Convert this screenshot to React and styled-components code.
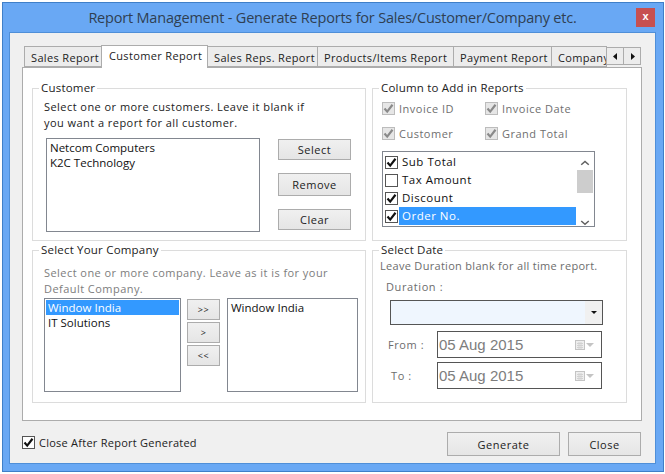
import styled, { createGlobalStyle } from "styled-components"

const GlobalStyle = createGlobalStyle`
    html, body { margin: 0; padding: 0; background: #fff; }
    body { font-family: "Open Sans", "Noto Sans", sans-serif; font-size: 11px; color: #222; }
`

const Tick = ({ color = "#111" }) => (
    <svg width="11" height="11" viewBox="0 0 11 11">
        <path d="M1.5 5.5 L4.2 8.6 L9.5 1.8" fill="none" stroke={color} strokeWidth="2.2" />
    </svg>
)

const CheckBox = ({ checked, disabled }) => (
    <Box $disabled={disabled}>{checked && <Tick color={disabled ? "#8a8a8a" : "#111"} />}</Box>
)

const CalendarIcon = () => (
    <svg width="20" height="10" viewBox="0 0 20 10">
        <rect x="0.5" y="0.5" width="9" height="9" fill="#eee" stroke="#c4c4c4" />
        <path d="M2 3.5H8M2 5.5H8M2 7.5H8M4 2V9M6 2V9" stroke="#d2d2d2" />
        <path d="M11 3H19L15 7Z" fill="#c4c4c4" />
    </svg>
)

const tabs = [
    { label: "Sales Report", width: 78 },
    { label: "Customer Report", width: 107, active: true },
    { label: "Sales Reps. Report", width: 111 },
    { label: "Products/Items Report", width: 137 },
    { label: "Payment Report", width: 99 },
    { label: "Company Report", width: 56 },
]

const columns = [
    { label: "Sub Total", checked: true },
    { label: "Tax Amount", checked: false },
    { label: "Discount", checked: true },
    { label: "Order No.", checked: true, selected: true },
]

const App = () => (
    <>
        <GlobalStyle />
        <Window>
            <TitleBar>
                <span />
                <Title>Report Management - Generate Reports for Sales/Customer/Company etc.</Title>
                <CloseX>x</CloseX>
            </TitleBar>
            <Content>
                <TabStrip>
                    {tabs.map(t => (
                        <Tab key={t.label} $active={t.active} $width={t.width}>{t.label}</Tab>
                    ))}
                    <TabArrow>
                        <svg width="5" height="7" viewBox="0 0 5 7"><path d="M4 0V7L0 3.5Z" fill="#111" /></svg>
                    </TabArrow>
                    <TabArrow>
                        <svg width="5" height="7" viewBox="0 0 5 7"><path d="M1 0V7L5 3.5Z" fill="#111" /></svg>
                    </TabArrow>
                </TabStrip>
                <Pane>
                    <Group>
                        <Legend>Customer</Legend>
                        <Hint>Select one or more customers. Leave it blank if<br />you want a report for all customer.</Hint>
                        <CustomerRow>
                            <ListBox $width={214} $height={94}>
                                <ListItem>Netcom Computers</ListItem>
                                <ListItem>K2C Technology</ListItem>
                            </ListBox>
                            <ButtonStack>
                                <Button $width={73} $height={21}>Select</Button>
                                <Button $width={73} $height={23}>Remove</Button>
                                <Button $width={73} $height={21}>Clear</Button>
                            </ButtonStack>
                        </CustomerRow>
                    </Group>

                    <Group>
                        <Legend>Column to Add in Reports</Legend>
                        <FixedColumns>
                            <CheckRow $muted><CheckBox checked disabled />Invoice ID</CheckRow>
                            <CheckRow $muted><CheckBox checked disabled />Invoice Date</CheckRow>
                            <CheckRow $muted><CheckBox checked disabled />Customer</CheckRow>
                            <CheckRow $muted><CheckBox checked disabled />Grand Total</CheckRow>
                        </FixedColumns>
                        <CheckList>
                            <CheckListRows>
                                {columns.map(c => (
                                    <CheckListRow key={c.label}>
                                        <CheckBox checked={c.checked} />
                                        <CheckListLabel $selected={c.selected}>{c.label}</CheckListLabel>
                                    </CheckListRow>
                                ))}
                            </CheckListRows>
                            <ScrollBar>
                                <svg width="10" height="6" viewBox="0 0 10 6"><path d="M1 5L5 1.5L9 5" fill="none" stroke="#606060" strokeWidth="1.6" /></svg>
                                <ScrollThumb />
                                <svg width="10" height="6" viewBox="0 0 10 6"><path d="M1 1L5 4.5L9 1" fill="none" stroke="#606060" strokeWidth="1.6" /></svg>
                            </ScrollBar>
                        </CheckList>
                    </Group>

                    <Group>
                        <Legend>Select Your Company</Legend>
                        <CompanyHint>Select one or more company. Leave as it is for your<br />Default Company.</CompanyHint>
                        <CompanyRow>
                            <ListBox $width={137} $height={94}>
                                <ListItem $selected>Window India</ListItem>
                                <ListItem>IT Solutions</ListItem>
                            </ListBox>
                            <MoveStack>
                                <Button $width={33} $height={21} $small>&gt;&gt;</Button>
                                <Button $width={33} $height={21} $small>&gt;</Button>
                                <Button $width={33} $height={21} $small>&lt;&lt;</Button>
                            </MoveStack>
                            <ListBox $width={131} $height={94}>
                                <ListItem>Window India</ListItem>
                            </ListBox>
                        </CompanyRow>
                    </Group>

                    <Group>
                        <Legend>Select Date</Legend>
                        <DateHint>Leave Duration blank for all time report.</DateHint>
                        <DurationLabel>Duration :</DurationLabel>
                        <Combo>
                            <ComboField />
                            <ComboArrow>
                                <svg width="6" height="3" viewBox="0 0 6 3"><path d="M0 0H6L3 3Z" fill="#111" /></svg>
                            </ComboArrow>
                        </Combo>
                        <DateRow>
                            <DateLabel $indent={0}>From :</DateLabel>
                            <DateField>05 Aug 2015<CalendarIcon /></DateField>
                        </DateRow>
                        <DateRow $gap={4}>
                            <DateLabel $indent={3}>To :</DateLabel>
                            <DateField>05 Aug 2015<CalendarIcon /></DateField>
                        </DateRow>
                    </Group>
                </Pane>
                <Footer>
                    <FooterCheck><CheckBox checked />Close After Report Generated</FooterCheck>
                    <FooterButtons>
                        <Button $width={113} $height={24}>Generate</Button>
                        <Button $width={73} $height={24}>Close</Button>
                    </FooterButtons>
                </Footer>
            </Content>
        </Window>
    </>
)

const Window = styled.div`
    box-sizing: border-box;
    width: 662px;
    height: 470px;
    margin: 2px 0 0 2px;
    border: 1px solid #3f7fc8;
    background: #69a8f4;
    display: flex;
    flex-direction: column;
    padding: 0 7px 7px 6px;
`

const TitleBar = styled.div`
    height: 29px;
    flex: none;
    display: grid;
    grid-template-columns: 1fr auto 1fr;
    align-items: start;
`

const Title = styled.div`
    font-size: 14.5px;
    line-height: 30px;
    color: #2f3f52;
    white-space: nowrap;
    letter-spacing: -0.2px;
`

const CloseX = styled.div`
    justify-self: end;
    width: 19px;
    height: 19px;
    margin: 5px 1px 0 0;
    background: #c75050;
    color: #fff;
    font: bold 11px/17px "Liberation Sans", sans-serif;
    text-align: center;
`

const Content = styled.div`
    flex: 1;
    background: #f0f0f0;
    border: 1px solid #4f8fd8;
    padding: 13px 13px 0 12px;
    display: flex;
    flex-direction: column;
`

const TabStrip = styled.div`
    height: 22px;
    flex: none;
    display: flex;
    align-items: flex-end;
    padding-left: 3px;
    position: relative;
    z-index: 1;
    margin-bottom: -1px;
`

const Tab = styled.div`
    box-sizing: border-box;
    width: ${p => p.$width}px;
    height: ${p => (p.$active ? 23 : 21)}px;
    margin-bottom: ${p => (p.$active ? 0 : 1)}px;
    border: 1px solid #acacac;
    border-bottom: ${p => (p.$active ? "none" : "1px solid #acacac")};
    margin-left: -1px;
    background: ${p => (p.$active ? "#fff" : "#ececec")};
    font-size: 11px;
    line-height: ${p => (p.$active ? 19 : 21)}px;
    padding-left: ${p => (p.$active ? 7 : 6)}px;
    white-space: nowrap;
    overflow: hidden;
    letter-spacing: 0.35px;
    flex: none;
`

const TabArrow = styled.div`
    box-sizing: border-box;
    width: 18px;
    height: 18px;
    margin: 0 0 3px -1px;
    border: 1px solid #acacac;
    background: #ececec;
    display: flex;
    align-items: center;
    justify-content: center;
    flex: none;
`

const Pane = styled.div`
    box-sizing: border-box;
    height: 354px;
    flex: none;
    background: #fff;
    border: 1px solid #acacac;
    padding: 20px 14px 0 9px;
    display: grid;
    grid-template-columns: 334px 255px;
    grid-template-rows: 153px 153px;
    column-gap: 6px;
    row-gap: 9px;
`

const Group = styled.div`
    box-sizing: border-box;
    position: relative;
    border: 1px solid #dcdcdc;
`

const Legend = styled.div`
    position: absolute;
    top: -9px;
    left: 6px;
    padding: 0 2px;
    background: #fff;
    font-size: 11.5px;
    line-height: 16px;
    letter-spacing: 0.2px;
    white-space: nowrap;
`

const Hint = styled.div`
    margin: 10px 0 0 11px;
    font-size: 11px;
    line-height: 16px;
    letter-spacing: 0.45px;
    white-space: nowrap;
`

const CompanyHint = styled(Hint)`
    color: #7d7d7d;
    margin-top: 14px;
`

const DateHint = styled(Hint)`
    color: #6d6d6d;
    margin: 7px 0 0 7px;
    letter-spacing: 0.3px;
`

const CustomerRow = styled.div`
    display: flex;
    margin: 7px 0 0 13px;
`

const ListBox = styled.div`
    box-sizing: border-box;
    width: ${p => p.$width}px;
    height: ${p => p.$height}px;
    flex: none;
    border: 1px solid #828790;
    background: #fff;
    padding: 1px;
`

const ListItem = styled.div`
    height: 15px;
    font-size: 11.5px;
    line-height: 15px;
    padding-left: 2px;
    background: ${p => (p.$selected ? "#3399ff" : "transparent")};
    color: ${p => (p.$selected ? "#fff" : "#111")};
`

const ButtonStack = styled.div`
    display: flex;
    flex-direction: column;
    gap: 13px;
    margin: 1px 0 0 18px;
`

const MoveStack = styled.div`
    display: flex;
    flex-direction: column;
    gap: 2px;
    margin: 1px 7px 0 6px;
`

const Button = styled.div`
    box-sizing: border-box;
    width: ${p => p.$width}px;
    height: ${p => p.$height}px;
    border: 1px solid #acacac;
    background: linear-gradient(#f0f0f0, #e5e5e5);
    font-size: ${p => (p.$small ? 9 : 11)}px;
    letter-spacing: 0.5px;
    display: flex;
    align-items: center;
    justify-content: center;
    color: #222;
    flex: none;
`

const Box = styled.span`
    box-sizing: border-box;
    width: 13px;
    height: 13px;
    flex: none;
    border: 1px solid ${p => (p.$disabled ? "#bcbcbc" : "#555")};
    background: ${p => (p.$disabled ? "#e6e6e6" : "#fff")};
    display: inline-flex;
    align-items: center;
    justify-content: center;
`

const CheckRow = styled.div`
    display: flex;
    align-items: center;
    gap: 4px;
    font-size: 11px;
    letter-spacing: 0.5px;
    white-space: nowrap;
    color: ${p => (p.$muted ? "#6f6f6f" : "#222")};
`

const FooterCheck = styled(CheckRow)`
    letter-spacing: 0.25px;
    margin-top: -4px;
`

const FixedColumns = styled.div`
    display: grid;
    grid-template-columns: 103px 1fr;
    grid-auto-rows: 25px;
    margin: 7px 0 0 9px;
    align-items: center;
`

const CheckList = styled.div`
    box-sizing: border-box;
    width: 213px;
    height: 76px;
    margin: 5px 0 0 9px;
    border: 1px solid #828790;
    display: flex;
    background: #fff;
`

const CheckListRows = styled.div`
    flex: 1;
    padding: 1px 0 0 2px;
`

const CheckListRow = styled.div`
    height: 18px;
    display: flex;
    align-items: center;
    gap: 1px;
`

const CheckListLabel = styled.div`
    flex: 1;
    height: 18px;
    font-size: 11.5px;
    line-height: 17px;
    letter-spacing: 0.5px;
    padding-left: 3px;
    background: ${p => (p.$selected ? "#3399ff" : "transparent")};
    color: ${p => (p.$selected ? "#fff" : "#111")};
`

const ScrollBar = styled.div`
    width: 16px;
    margin: 0 1px 0 1px;
    display: flex;
    flex-direction: column;
    align-items: center;
    padding-top: 8px;
    gap: 0;
    svg:last-child { margin-top: 27px; }
`

const ScrollThumb = styled.div`
    width: 100%;
    height: 25px;
    margin-top: 4px;
    background: #cdcdcd;
`

const CompanyRow = styled.div`
    display: flex;
    margin: 1px 0 0 11px;
`

const DurationLabel = styled.div`
    margin: 5px 0 0 13px;
    font-size: 11px;
    line-height: 16px;
    letter-spacing: 0.6px;
    color: #6d6d6d;
`

const Combo = styled.div`
    box-sizing: border-box;
    width: 213px;
    height: 25px;
    margin: 5px 0 0 17px;
    border: 1px solid #555;
    display: flex;
`

const ComboField = styled.div`
    flex: 1;
    background: #eff6fe;
`

const ComboArrow = styled.div`
    width: 17px;
    background: #f0f0f0;
    display: flex;
    align-items: center;
    justify-content: center;
`

const DateRow = styled.div`
    display: flex;
    align-items: center;
    margin-top: ${p => p.$gap ?? 6}px;
`

const DateLabel = styled.div`
    width: ${p => 49 - p.$indent}px;
    box-sizing: border-box;
    margin-left: ${p => 15 + p.$indent}px;
    font-size: 11px;
    letter-spacing: 0.6px;
    color: #6d6d6d;
`

const DateField = styled.div`
    box-sizing: border-box;
    width: 165px;
    height: 27px;
    border: 1px solid #555;
    background: #fff;
    display: flex;
    align-items: center;
    justify-content: space-between;
    padding: 0 6px 0 1px;
    font: 15px "Liberation Sans", sans-serif;
    color: #7d7d7d;
`

const Footer = styled.div`
    display: flex;
    justify-content: space-between;
    align-items: center;
    padding: 11px 0 0 0;
`

const FooterButtons = styled.div`
    display: flex;
    gap: 8px;
    margin-right: 1px;
`

export default App
